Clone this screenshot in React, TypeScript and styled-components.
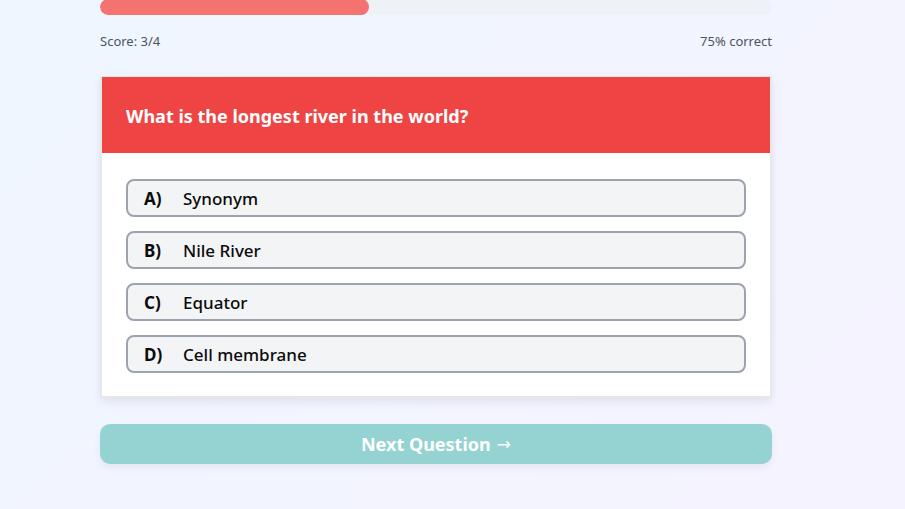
import React from "react";
import styled, { createGlobalStyle } from "styled-components";

const Global = createGlobalStyle`
  html, body { margin: 0; padding: 0; }
  body {
    font-family: "Noto Sans", "Open Sans", sans-serif;
    background: linear-gradient(135deg, #eff6ff 0%, #f5f3ff 100%);
    min-height: 509px;
    width: 905px;
    overflow: hidden;
  }
`;

const Page = styled.div`
  width: 672px;
  padding-left: 100px;
  display: flex;
  flex-direction: column;
`;

const Track = styled.div`
  height: 16px;
  border-radius: 8px;
  background: #eef2f7;
  overflow: hidden;
  margin-top: -1px;
`;

const Fill = styled.div`
  height: 100%;
  border-radius: 8px;
  background: #f47370;
`;

const ScoreRow = styled.div`
  display: flex;
  justify-content: space-between;
  margin-top: 18px;
  font-size: 13px;
  color: #4b5563;
  line-height: 17px;
`;

const Card = styled.div`
  margin-top: 26px;
  background: #fff;
  border: 2px solid #e5e7eb;
  border-top-width: 1px;
  box-shadow: 0 4px 10px rgba(0, 0, 0, 0.08);
  display: flex;
  flex-direction: column;
`;

const Header = styled.div`
  background: #ef4444;
  height: 76px;
  display: flex;
  align-items: center;
  padding: 2px 24px 0;
  box-sizing: border-box;
  color: #fff;
  font-weight: 700;
  font-size: 18px;
`;

const Options = styled.div`
  padding: 26px 24px 23px;
  display: flex;
  flex-direction: column;
  gap: 14px;
`;

const Option = styled.div`
  height: 34px;
  border: 2px solid #9ca3af;
  border-radius: 8px;
  background: #f3f4f6;
  display: flex;
  align-items: center;
  padding: 0 16px;
  font-size: 17px;
  font-weight: 500;
  color: #0b0b0b;
`;

const Letter = styled.span`
  font-weight: 700;
  width: 39px;
  flex: none;
`;

const NextButton = styled.button`
  margin-top: 26px;
  height: 40px;
  border: none;
  border-radius: 10px;
  background: #94d3d1;
  color: #fff;
  font-family: inherit;
  font-weight: 700;
  font-size: 18px;
  box-shadow: 0 4px 8px rgba(0, 0, 0, 0.06);
  display: flex;
  align-items: center;
  justify-content: center;
  gap: 6px;
`;

const Arrow = styled.span`
  font-family: "DejaVu Sans", sans-serif;
  font-weight: 400;
  font-size: 17px;
`;

const options = [
  ["A)", "Synonym"],
  ["B)", "Nile River"],
  ["C)", "Equator"],
  ["D)", "Cell membrane"],
];

export default function App() {
  return (
    <>
      <Global />
      <Page>
        <Track>
          <Fill style={{ width: "40%" }} />
        </Track>
        <ScoreRow>
          <span>Score: 3/4</span>
          <span>75% correct</span>
        </ScoreRow>
        <Card>
          <Header>What is the longest river in the world?</Header>
          <Options>
            {options.map(([l, t]) => (
              <Option key={l}>
                <Letter>{l}</Letter>
                <span>{t}</span>
              </Option>
            ))}
          </Options>
        </Card>
        <NextButton>
          Next Question<Arrow>→</Arrow>
        </NextButton>
      </Page>
    </>
  );
}
